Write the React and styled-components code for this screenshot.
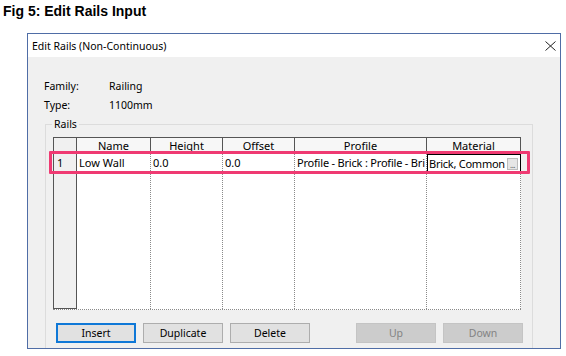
import React from "react";
import styled, { createGlobalStyle } from "styled-components";

const Global = createGlobalStyle`
  html, body { margin: 0; padding: 0; background: #ffffff; }
  body { font-family: "Noto Sans", "Open Sans", sans-serif; color: #000; }
  * { box-sizing: border-box; }
`;

const Page = styled.div`
  width: 566px;
  height: 356px;
  padding-top: 3px;
  overflow: hidden;
`;

const Heading = styled.h1`
  margin: 0 0 0 3px;
  font-family: "Liberation Sans", Arial, sans-serif;
  font-weight: bold;
  font-size: 14px;
  line-height: 16px;
  height: 16px;
`;

const Dialog = styled.div`
  margin: 14px 0 0 27px;
  width: 534px;
  height: 316px;
  border: 1px solid #4f6da6;
  background: #f0f0f0;
  display: flex;
  flex-direction: column;
  overflow: hidden;
`;

const TitleBar = styled.div`
  height: 23px;
  flex: none;
  background: #ffffff;
  display: flex;
  align-items: center;
  justify-content: space-between;
  padding: 0 4px 0 4px;
  font-size: 10.5px;
  color: #000;
`;

const CloseIcon = () => (
  <svg width="11" height="10" viewBox="0 0 11 10">
    <path d="M0.5 0.5 L10.5 9.5 M10.5 0.5 L0.5 9.5" stroke="#222" strokeWidth="1" fill="none" />
  </svg>
);

const Body = styled.div`
  flex: 1;
  display: flex;
  flex-direction: column;
  padding-top: 19px;
`;

const InfoGrid = styled.div`
  display: grid;
  grid-template-columns: 65px auto;
  grid-auto-rows: 19px;
  padding-left: 16px;
  font-size: 10.5px;
  align-items: center;
`;

const GroupBox = styled.div`
  margin: 10px 0 0 17px;
  width: 488px;
  flex: 1;
  border: 1px solid #dcdcdc;
  border-bottom: none;
  display: flex;
  flex-direction: column;
  padding-left: 7px;
`;

const Legend = styled.div`
  align-self: flex-start;
  margin: -8px 0 0 -1px;
  padding: 0 2px;
  background: #f0f0f0;
  font-size: 10.5px;
  line-height: 14px;
  height: 14px;
`;

const TableWrap = styled.div`
  position: relative;
  margin-top: 6px;
  width: 468px;
  height: 173px;
`;

const Table = styled.div`
  display: grid;
  grid-template-columns: 24px 74px 72px 72px 132px 94px;
  grid-template-rows: 17px 19px 1fr;
  height: 100%;
  background: #ffffff;
  border-bottom: 1px dotted #8a8a8a;
  font-size: 11px;
`;

const HeadCell = styled.div`
  background: ${(p) => (p.$corner ? "#f0f0f0" : "#f7f7f7")};
  border-top: 1px solid #555;
  border-left: ${(p) => (p.$corner ? "1px solid #555" : "none")};
  border-right: 1px solid #555;
  border-bottom: 1.5px solid #333;
  text-align: center;
  line-height: 15px;
  overflow: hidden;
  white-space: nowrap;
`;

const RowNum = styled.div`
  background: #f0f0f0;
  border-left: 1px solid #555;
  border-right: 1px solid #555;
  border-bottom: ${(p) => (p.$last ? "1px solid #555" : "none")};
  padding-left: 3px;
  line-height: 18px;
`;

const Cell = styled.div`
  border-right: 1px dotted #8a8a8a;
  padding-left: 2px;
  line-height: 18px;
  white-space: nowrap;
  overflow: hidden;
  letter-spacing: ${(p) => (p.$tight ? "-0.2px" : "0")};
`;

const EditCell = styled.div`
  border: 1px solid #000;
  display: flex;
  align-items: center;
  padding-left: 1px;
  white-space: nowrap;
  overflow: hidden;
  justify-content: space-between;
  letter-spacing: -0.25px;
`;

const Ellipsis = styled.span`
  width: 11px;
  height: 12px;
  margin-right: 2px;
  background: #e6e6e6;
  border: 1px solid #bcbcbc;
  font-size: 8px;
  line-height: 12px;
  letter-spacing: -0.5px;
  color: #555;
  text-align: center;
  flex: none;
  overflow: hidden;
`;

const Highlight = styled.div`
  position: absolute;
  left: -4px;
  top: 14px;
  width: 481px;
  height: 23px;
  border: 3px solid #ef3a72;
  border-radius: 1px;
  pointer-events: none;
`;

const ButtonRow = styled.div`
  display: flex;
  margin: 13px 0 0 3px;
  gap: 7px;
`;

const Button = styled.button`
  width: 80px;
  height: 20px;
  padding: 0;
  font-family: "Noto Sans", "Open Sans", sans-serif;
  font-size: 10.5px;
  background: ${(p) => (p.disabled ? "#cccccc" : "#e1e1e1")};
  color: ${(p) => (p.disabled ? "#838383" : "#000")};
  border: ${(p) =>
    p.$focus ? "2px solid #0f78d7" : p.disabled ? "1px solid #c4c4c4" : "1px solid #adadad"};
  margin-left: ${(p) => p.$gapLeft || 0}px;
`;

const columns = ["Name", "Height", "Offset", "Profile", "Material"];

export default function App() {
  return (
    <Page>
      <Global />
      <Heading>Fig 5: Edit Rails Input</Heading>
      <Dialog>
        <TitleBar>
          <span>Edit Rails (Non-Continuous)</span>
          <CloseIcon />
        </TitleBar>
        <Body>
          <InfoGrid>
            <span>Family:</span>
            <span>Railing</span>
            <span>Type:</span>
            <span>1100mm</span>
          </InfoGrid>
          <GroupBox>
            <Legend>Rails</Legend>
            <TableWrap>
              <Table>
                <HeadCell $corner />
                {columns.map((c) => (
                  <HeadCell key={c}>{c}</HeadCell>
                ))}
                <RowNum>1</RowNum>
                <Cell>Low Wall</Cell>
                <Cell>0.0</Cell>
                <Cell>0.0</Cell>
                <Cell $tight>Profile - Brick : Profile - Bri</Cell>
                <EditCell>
                  <span>Brick, Common</span>
                  <Ellipsis>...</Ellipsis>
                </EditCell>
                <RowNum $last />
                <Cell />
                <Cell />
                <Cell />
                <Cell />
                <Cell />
              </Table>
              <Highlight />
            </TableWrap>
            <ButtonRow>
              <Button $focus>Insert</Button>
              <Button>Duplicate</Button>
              <Button>Delete</Button>
              <Button disabled $gapLeft={39}>Up</Button>
              <Button disabled>Down</Button>
            </ButtonRow>
          </GroupBox>
        </Body>
      </Dialog>
    </Page>
  );
}
